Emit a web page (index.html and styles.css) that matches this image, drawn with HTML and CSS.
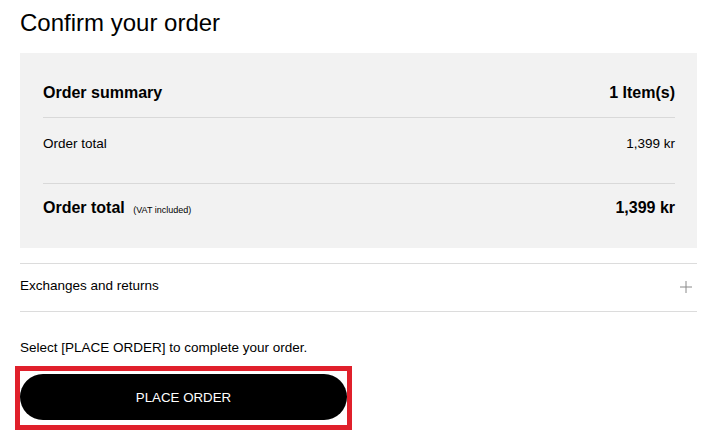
FILE: index.html
```html
<!DOCTYPE html>
<html lang="en">
<head>
<meta charset="utf-8">
<title>Confirm your order</title>
<link rel="stylesheet" href="styles.css">
</head>
<body>
<main class="page">
  <h1 class="title">Confirm your order</h1>
  <section class="summary">
    <div class="row row-head">
      <span>Order summary</span>
      <span>1 Item(s)</span>
    </div>
    <div class="row row-sub">
      <span>Order total</span>
      <span>1,399 kr</span>
    </div>
    <div class="row row-total">
      <span>Order total <small class="vat">(VAT included)</small></span>
      <span>1,399 kr</span>
    </div>
  </section>
  <div class="accordion">
    <span>Exchanges and returns</span>
    <svg class="plus" width="12" height="12" viewBox="0 0 12 12" aria-hidden="true"><path d="M6 0V12M0 6H12" stroke="#8a8a8a" stroke-width="1" fill="none"/></svg>
  </div>
  <p class="note">Select [PLACE ORDER] to complete your order.</p>
  <div class="cta">
    <button class="place" type="button">PLACE ORDER</button>
  </div>
</main>
</body>
</html>
```
FILE: styles.css
```css
* { box-sizing: border-box; }
html, body { margin: 0; padding: 0; background: #fff; }
body {
  font-family: "Liberation Sans", Arial, sans-serif;
  color: #000;
}
.page {
  width: 677px;
  margin-left: 20px;
  padding-top: 5px;
  padding-bottom: 27px;
  min-height: 447px;
}
.title {
  font-size: 24px;
  font-weight: 400;
  line-height: 36px;
  margin: 0 0 12px 0;
}
.summary {
  background: #f2f2f2;
  padding: 0 22px 0 23px;
}
.row {
  display: flex;
  justify-content: space-between;
  align-items: baseline;
  line-height: 20px;
}
.row-head {
  font-size: 16px;
  font-weight: 700;
  padding: 30px 0 14px;
  border-bottom: 1px solid #d9d9d9;
}
.row-sub {
  font-size: 13.5px;
  padding: 16px 0 29px;
  border-bottom: 1px solid #d9d9d9;
}
.row-total {
  font-size: 16px;
  font-weight: 700;
  padding: 14px 0 30px;
}
.vat {
  font-size: 9px;
  font-weight: 400;
  line-height: 1;
  margin-left: 4px;
}
.accordion {
  margin-top: 15px;
  border-top: 1px solid #dcdcdc;
  border-bottom: 1px solid #dcdcdc;
  display: flex;
  justify-content: space-between;
  align-items: center;
  font-size: 13.5px;
  line-height: 20px;
  padding: 12px 5px 15px 0;
}
.plus { display: block; margin-top: 2px; }
.note {
  font-size: 13.5px;
  line-height: 20px;
  margin: 26px 0 16px;
}
.cta {
  position: relative;
  width: 327px;
}
.cta::after {
  content: "";
  position: absolute;
  left: -5px;
  right: -5px;
  top: -8px;
  bottom: -10px;
  border: 5px solid #e0202b;
  pointer-events: none;
}
.place {
  display: block;
  width: 327px;
  height: 46px;
  border: 0;
  border-radius: 23px;
  background: #000;
  color: #fff;
  font-family: "Liberation Sans", Arial, sans-serif;
  font-size: 13.3px;
  padding: 0;
}
```
